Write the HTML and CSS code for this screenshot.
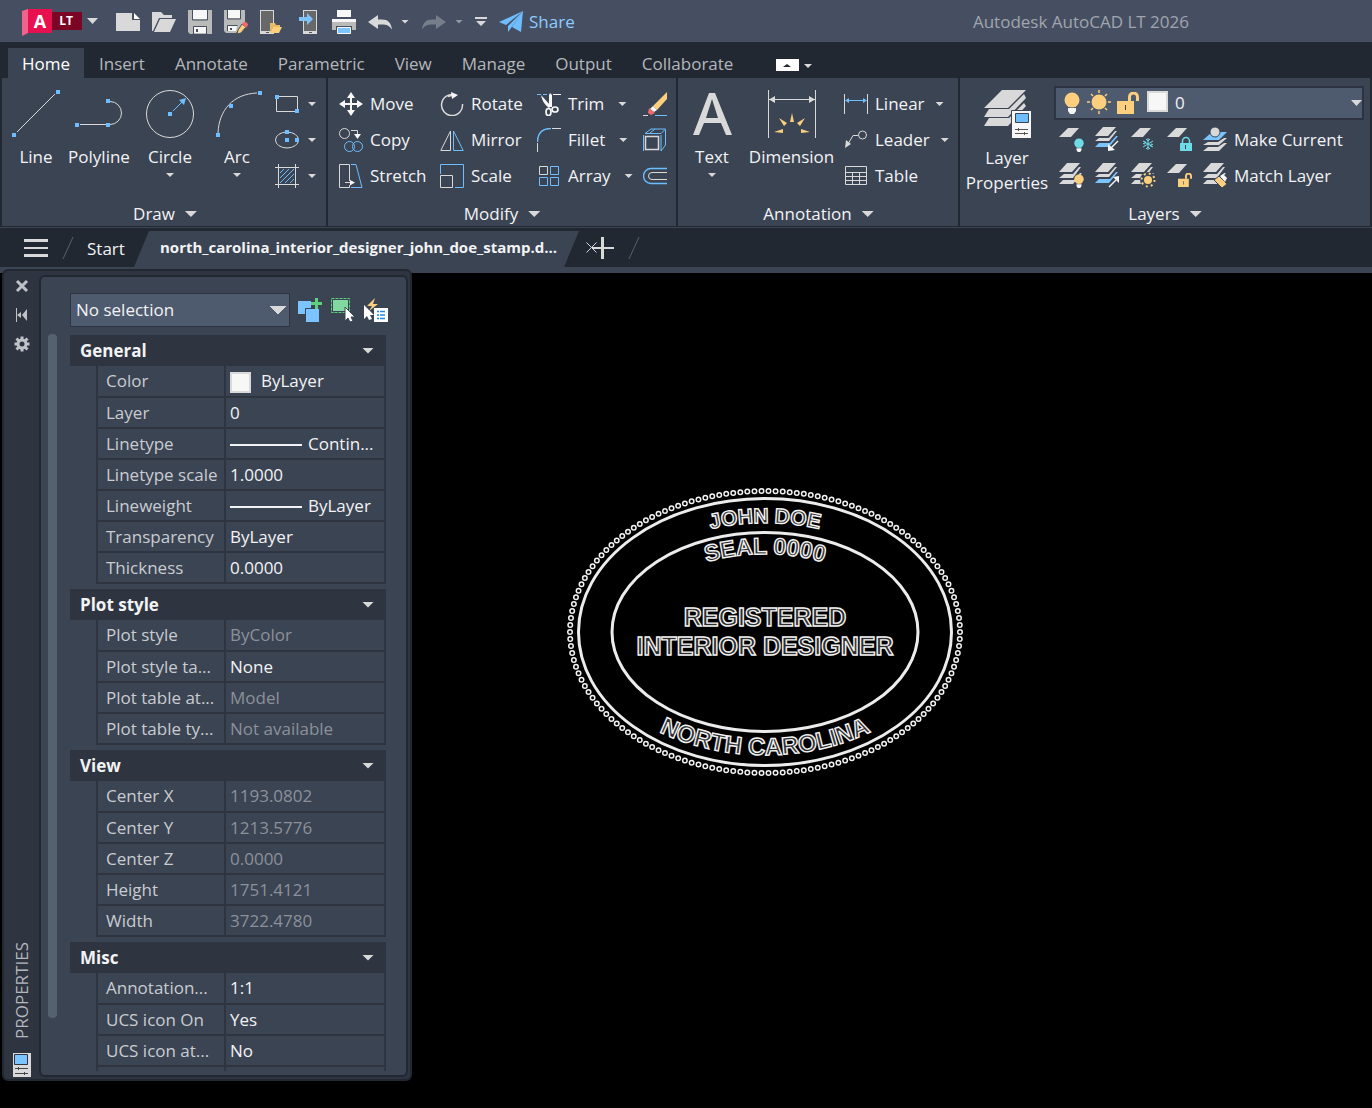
FILE: index.html
```html
<!DOCTYPE html>
<html lang="en">
<head>
<meta charset="utf-8">
<title>Autodesk AutoCAD LT 2026</title>
<link rel="stylesheet" href="styles.css">
</head>
<body>
<svg class="defs" aria-hidden="true">
  <symbol id="sheet" viewBox="0 0 20 10"><path fill="#d9d9d9" d="M9 0h11l-8 9H0z"/></symbol>
  <symbol id="stack" viewBox="0 0 24 24">
    <path fill="#d9d9d9" d="M8 0h13l-8 9H0zM5 11h9l6-7h2l-8 11H0zM4 17h11l6-7h2l-9 11H0z"/>
  </symbol>
  <symbol id="stack-blue" viewBox="0 0 24 24">
    <path fill="#d9d9d9" d="M8 0h13l-8 9H0zM4 11h10l6-7h2l-8 10H0z"/><path fill="#7cc4ff" d="M4 16h11l6-7h2l-9 11H0z"/>
  </symbol>
  <symbol id="bulb" viewBox="0 0 16 22"><circle cx="8" cy="8" r="7.500" fill="currentColor"/><path fill="currentColor" d="M4 12h8v3H4z"/><path fill="#f7f7f7" d="M4 16h8v3l-2 3H6l-2-3z"/></symbol>
  <symbol id="lock-open" viewBox="0 0 22 22"><path fill="#fbcf7e" d="M0 9h17v13H0z"/><path fill="none" stroke="#fbcf7e" stroke-width="3" d="M12.500 9V5a4 4 0 0 1 8 0v4"/><path fill="#3b4453" d="M8 13h1v5H8z"/></symbol>
</svg>

<header class="titlebar">
  <button class="logo" aria-label="Application menu">
    <svg width="76" height="28" viewBox="0 0 76 28"><path fill="#f0648c" d="M0 2l6-2v24l-6 3z"/><path fill="#e8114f" d="M6 0h24v24H6z"/><path fill="#7a0524" d="M30 3h30v18H30z"/><text class="logo-a" x="18" y="19">A</text><text class="logo-lt" x="44" y="16">LT</text><path fill="#d9d9d9" d="M65 9h11l-5.500 6z"/></svg>
  </button>
  <div class="quick">
    <button aria-label="New"><svg width="24" height="24"><path fill="#d9d9d9" d="M0 3h16v7h8v11H0z"/><path fill="#fff" d="M18 3l6 6h-6z"/></svg></button>
    <button aria-label="Open"><svg width="24" height="24"><path fill="#d9d9d9" d="M0 21V2h9l3 3h8v3H7L1 21z"/><path fill="#d9d9d9" d="M8 9h16l-6 13H2z"/></svg></button>
    <button aria-label="Save"><svg width="24" height="24"><path fill="#b9bbb8" d="M0 0h24v24H2l-2-2z"/><path fill="#f7f7f7" d="M5 0h14v9H5zM6 17h12v6H6z"/><path stroke="#464f61" fill="none" d="M4.500 0v10h15V0M5.500 24v-7.500h13V24"/><path fill="#464f61" d="M8 19h2v3H8z"/></svg></button>
    <button aria-label="Save as"><svg width="24" height="24"><path fill="#b9bbb8" d="M0 0h21v12l-9 11H2l-2-2z"/><path fill="#f7f7f7" d="M4 0h12v8H4zM4 16h9l-1 5H4z"/><path stroke="#464f61" fill="none" d="M3.500 0v9h13V0M3.500 21v-5.500h10"/><path fill="#464f61" d="M6 18h2v2H6z"/><path fill="#fbcf7e" stroke="#464f61" d="M14 20l-1 4 4-1 5-6-4-3z"/><path fill="#f16a6a" d="M18 14l2-2h2l2 2v1l-2 3z"/></svg></button>
    <button aria-label="Open from mobile"><svg width="24" height="24"><rect x=".5" y=".5" width="13" height="23" fill="#686868" stroke="#d9d9d9"/><path fill="#d9d9d9" d="M0 21h14v3H0z"/><path fill="#555" d="M6 22h3v1H6z"/><path fill="#e9bb66" d="M10 23V13h5l1 2h4v2h-7z"/><path fill="#fbcf7e" d="M13 17h9l-3 6h-9z"/></svg></button>
    <button aria-label="Save to mobile"><svg width="24" height="24"><rect x="7.500" y=".5" width="13" height="23" fill="#686868" stroke="#d9d9d9"/><path fill="#d9d9d9" d="M7 21h14v3H7z"/><path fill="#555" d="M13 22h3v1h-3z"/><path fill="#7cc4ff" d="M3 7h8V3l6 6-6 6v-4H3z"/></svg></button>
    <button aria-label="Plot"><svg width="24" height="24"><path fill="#f7f7f7" d="M5 0h14v7H5zM0 9h24v4H0z"/><path fill="#b9bbb8" d="M0 12h24v8h-4v-4H4v4H0z"/><path fill="#7cc4ff" stroke="#f7f7f7" d="M5.500 17.500h13v6h-13z"/></svg></button>
    <button aria-label="Undo"><svg width="24" height="24"><path fill="#d9d9d9" d="M0 12l10-7v4.500h4c6 0 9 3 10 10-3-4-5-5-10-5h-4V19z"/></svg></button>
    <button class="drop" aria-label="Undo list"></button>
    <button aria-label="Redo"><svg width="24" height="24"><path fill="#777e8b" d="M24 12L14 5v4.500h-4c-6 0-9 3-10 10 3-4 5-5 10-5h4V19z"/></svg></button>
    <button class="drop dim" aria-label="Redo list"></button>
    <button class="customize" aria-label="Customize"><svg width="12" height="12"><path fill="#d9d9d9" d="M0 1h12v2H0zM1 5h10l-5 5z"/></svg></button>
    <button class="share"><svg width="24" height="22"><path fill="#6ebeff" d="M24 0L0 11l7 3zM24 0L9 15v6l3-4zM24 0L13 16l9 5z"/></svg>Share</button>
  </div>
  <h1 class="app-title">Autodesk AutoCAD LT 2026</h1>
</header>

<nav class="ribbon-tabs">
  <a class="on" href="#home">Home</a><a href="#insert">Insert</a><a href="#annotate">Annotate</a><a href="#parametric">Parametric</a><a href="#view">View</a><a href="#manage">Manage</a><a href="#output">Output</a><a href="#collaborate">Collaborate</a>
  <button class="minimize" aria-label="Minimize ribbon"><svg width="36" height="12"><path fill="#fff" d="M0 0h23v12H0z"/><path fill="#222831" d="M7 8h8l-4-3z"/><path fill="#d9d9d9" d="M28 5h8l-4 4z"/></svg></button>
</nav>

<div class="ribbon">
  <section class="panel draw">
    <div class="tools">
      <button class="big line"><svg width="50" height="50" fill="none" stroke="#d9d9d9"><path d="M6 42L44 4"/><path fill="#6ebeff" stroke="none" d="M1 43h4v4H1zM45 0h4v4h-4z"/></svg>Line</button>
      <button class="big polyline"><svg width="50" height="50" fill="none" stroke="#d9d9d9"><path d="M6 34.500h26M36 11.500a11.500 11.500 0 0 1 0 23"/><path fill="#6ebeff" stroke="none" d="M1 33h4v4H1zM32 33h4v4h-4zM32 9h4v4h-4z"/></svg>Polyline</button>
      <button class="big circle"><svg width="50" height="50" fill="none" stroke="#d9d9d9"><circle cx="25" cy="24" r="23.500"/><path stroke="#6ebeff" d="M28 21l9-9"/><path fill="#6ebeff" stroke="none" d="M23 22h4v4h-4zM41 8l-2 7-5-5z"/></svg>Circle<i class="caret"></i></button>
      <button class="big arc"><svg width="50" height="50" fill="none" stroke="#d9d9d9"><path d="M6 43C7 20 21 4 45 3"/><path fill="#6ebeff" stroke="none" d="M4 43h4v4H4zM17 14h4v4h-4zM46 1h4v4h-4z"/></svg>Arc<i class="caret"></i></button>
      <div class="column">
        <button class="tool" aria-label="Rectangle"><svg width="24" height="24" fill="none" stroke="#d9d9d9"><path d="M1.500 4.500h21v15h-21z"/><path fill="#6ebeff" stroke="none" d="M0 3h4v4H0zM20 17h4v4h-4z"/></svg><i class="caret"></i></button>
        <button class="tool" aria-label="Ellipse"><svg width="24" height="24" fill="none" stroke="#d9d9d9"><ellipse cx="12" cy="12" rx="11.500" ry="8"/><path fill="#6ebeff" stroke="none" d="M10 2h4v4h-4zM10 10h4v4h-4zM20 10h4v4h-4z"/></svg><i class="caret"></i></button>
        <button class="tool" aria-label="Hatch"><svg width="24" height="24" fill="none" stroke="#d9d9d9"><path d="M0 3.500h24M0 20.500h24M3.500 0v24M20.500 0v24"/><path stroke="#6ebeff" d="M5 9l4-4M5 14l9-9M5 19L19 5M10 19l9-9M15 19l4-4"/></svg><i class="caret"></i></button>
      </div>
    </div>
    <button class="panel-name">Draw<i class="caret wide"></i></button>
  </section>

  <section class="panel modify">
    <div class="tools grid">
      <button class="tool"><svg width="24" height="24"><path fill="#f7f7f7" d="M12 0l4 6h-3v5h5V8l6 4-6 4v-3h-5v5h3l-4 6-4-6h3v-5H6v3l-6-4 6-4v3h5V6H8z"/></svg>Move</button>
      <button class="tool"><svg width="24" height="24" fill="none" stroke="#d9d9d9"><path stroke-width="1.500" d="M15 3A10.500 10.500 0 1 0 22.500 12M8 4.500L13 3"/><path fill="#f7f7f7" stroke="none" d="M11 0l7 3-6 4z"/></svg>Rotate</button>
      <button class="tool"><svg width="24" height="24" fill="none" stroke="#f7f7f7"><path stroke="#6ebeff" stroke-dasharray="4 2" d="M0 2.500h12"/><path d="M16 2.500h8"/><path fill="#f7f7f7" stroke="none" d="M4 3l10 11-2 2C7 12 5 8 4 3zM13 1l2 2v12h-3V3z"/><ellipse cx="11.500" cy="20" rx="2.500" ry="3.500" stroke-width="1.700"/><ellipse cx="18" cy="17.500" rx="3" ry="2.500" stroke-width="1.700"/></svg>Trim<i class="caret"></i></button>
      <button class="tool" aria-label="Erase"><svg width="24" height="24"><path fill="#fbcf7e" d="M24 0v7L14 18l-4-4z"/><path fill="#f7f7f7" d="M10 14l4 4-3 2-4-3z"/><path fill="#f16a6a" d="M6 16l6 5-4 2-3-2z"/><path fill="#d9d9d9" d="M0 23h5v1H0z"/><path fill="#6ebeff" d="M12 23h12v1H12z"/></svg></button>

      <button class="tool"><svg width="24" height="24" fill="none" stroke="#d9d9d9"><circle cx="5.500" cy="5.500" r="5"/><path d="M12 2.500h6.500V8"/><path fill="#f7f7f7" stroke="none" d="M15 6h7l-3.500 5z"/><g stroke="#6ebeff"><circle cx="10.500" cy="18.500" r="5"/><circle cx="18.500" cy="18.500" r="5"/></g></svg>Copy</button>
      <button class="tool"><svg width="24" height="24" fill="none" stroke="#d9d9d9"><path d="M10.500 3v19.500H.8z"/><path stroke="#6ebeff" d="M13.500 3v19.500h9.700z"/></svg>Mirror</button>
      <button class="tool"><svg width="24" height="24" fill="none" stroke="#d9d9d9"><path stroke="#6ebeff" stroke-width="1.500" d="M.5 14C.5 5 5 .5 14 .5"/><path d="M15 .5h9M.5 15v9"/></svg>Fillet<i class="caret"></i></button>
      <button class="tool" aria-label="Explode"><svg width="24" height="24" fill="none" stroke="#6ebeff"><path d="M.5 23V7M2 5.500L8 1h14.500L18 5.500zM18 7v16l4.500-6V2M7 5l5-4"/><path stroke="#d9d9d9" stroke-width="1.500" d="M2.500 8.500h13v13h-13z"/></svg></button>

      <button class="tool"><svg width="24" height="24" fill="none" stroke="#d9d9d9"><path d="M10.500 17V.5H.5v23h10V21M6 18.500h8"/><path fill="#f7f7f7" stroke="none" d="M11 16l5 2.500-5 3z"/><path stroke="#6ebeff" d="M12 .5h5l6 23H12"/></svg>Stretch</button>
      <button class="tool"><svg width="24" height="24" fill="none" stroke="#6ebeff"><path d="M.5 10V.5h23v23H15"/><path stroke="#d9d9d9" d="M.5 11.500h12v12H.5z"/></svg>Scale</button>
      <button class="tool"><svg width="24" height="24" fill="none" stroke="#6ebeff"><path stroke="#d9d9d9" d="M2.500 2.500h8v8h-8z"/><path d="M13.500 2.500h8v8h-8zM2.500 13.500h8v8h-8zM13.500 13.500h8v8h-8z"/></svg>Array<i class="caret"></i></button>
      <button class="tool" aria-label="Offset"><svg width="24" height="24" fill="none" stroke="#6ebeff"><path stroke-width="1.300" d="M24 4.500H8a7.500 7.500 0 0 0 0 15h16"/><path stroke="#d9d9d9" d="M24 8.500H9a3.500 3.500 0 0 0 0 7h15"/></svg></button>
    </div>
    <button class="panel-name">Modify<i class="caret wide"></i></button>
  </section>

  <section class="panel annotation">
    <div class="tools">
      <button class="big text"><svg width="50" height="50"><path fill="#d9d9d9" fill-rule="evenodd" d="M22 3h6l17 42h-6l-5-12H17l-5 12H6zM25 9l-6 19h12z"/></svg>Text<i class="caret"></i></button>
      <button class="big dimension"><svg width="50" height="50" fill="none" stroke="#d9d9d9"><path d="M1.500 0v48M48.500 0v48M2 9.500h46"/><path fill="#d9d9d9" stroke="none" d="M2 9.500L8 6v7zM48 9.500L42 6v7z"/><path fill="#fbcf7e" stroke="none" d="M25 23l2 9h-4zM12 28l8 5-3 3zM38 28l-8 5 3 3zM7 42l9-3v4zM43 42l-9-3v4z"/></svg>Dimension</button>
      <div class="column">
        <button class="tool"><svg width="24" height="24" fill="none" stroke="#d9d9d9"><path d="M.5 2v20M23.500 2v20"/><path stroke="#6ebeff" d="M2 8.500h20"/><path fill="#6ebeff" stroke="none" d="M1 8.500L5 6v5zM23 8.500L19 6v5z"/></svg>Linear<i class="caret"></i></button>
        <button class="tool"><svg width="24" height="24" fill="none" stroke="#d9d9d9"><circle cx="18.500" cy="7" r="4"/><path d="M14 7.500H9L4 16"/><path fill="#d9d9d9" stroke="none" d="M1 20l1-8 5 4z"/></svg>Leader<i class="caret"></i></button>
        <button class="tool"><svg width="24" height="24" fill="none" stroke="#d9d9d9"><path d="M1.500 2.500h21v18h-21zM1 8.500h22M1 12.500h22M1 16.500h22M8.500 8v12M15.500 8v12"/></svg>Table</button>
      </div>
    </div>
    <button class="panel-name">Annotation<i class="caret wide"></i></button>
  </section>

  <section class="panel layers">
    <div class="tools">
      <button class="big properties"><svg width="50" height="50"><path fill="#d9d9d9" d="M20 0h24L26 18H2zM7 19h20L42 4l2 4-18 19H2zM7 28h20l15-15 2 3-18 20H2z"/><path fill="#f7f7f7" stroke="#3b4453" d="M29.500 20.500h20v28h-20z"/><path fill="#6ebeff" stroke="#3b4453" d="M33.500 23.500h13v9h-13z"/><path stroke="#555" d="M33 39.500h13M33 43.500h13M36.500 38v3M42.500 42v3"/></svg>Layer<br>Properties</button>
      <div class="layer-side">
        <label class="layer-combo">
          <svg width="110" height="26" aria-label="Layer"><use href="#bulb" x="2" y="2" width="16" height="22" color="#fbcf7e"/><circle cx="37" cy="12" r="7.500" fill="#fbcf7e"/><path stroke="#fbcf7e" stroke-width="1.500" d="M37 0v3M37 21v3M25 12h3M46 12h3M29 4l2 2M45 4l-2 2M29 20l2-2M45 20l-2-2"/><use href="#lock-open" x="55" y="2" width="22" height="22"/><path fill="#f7f7f7" stroke="#d9d9d9" stroke-width="2" d="M86 2h19v19H86z"/></svg>
          <select><option>0</option></select>
        </label>
        <div class="layer-grid">
          <button class="tool" aria-label="Layer off"><svg width="26" height="26"><use href="#sheet" y="1" width="20" height="10"/><use href="#bulb" x="15" y="11" width="10" height="14" color="#6fdbe6"/></svg></button>
          <button class="tool" aria-label="Isolate"><svg width="26" height="26"><use href="#stack-blue" width="24" height="24"/><path stroke="#f7f7f7" stroke-width="1.500" d="M23 14l-7 7"/><path fill="#f7f7f7" d="M13 24v-7l7 6z"/></svg></button>
          <button class="tool" aria-label="Freeze"><svg width="26" height="26"><use href="#sheet" y="1" width="20" height="10"/><path stroke="#6fdbe6" fill="none" d="M17 11v12M12 14l10 6M22 14l-10 6M15 12l2 2 2-2M15 22l2-2 2 2M12 16.500l2 .5v-3M22 17.500l-2-.5v3"/></svg></button>
          <button class="tool" aria-label="Lock"><svg width="26" height="26"><use href="#sheet" y="1" width="20" height="10"/><path fill="#6fdbe6" d="M13 16h12v8H13z"/><path fill="none" stroke="#6fdbe6" stroke-width="1.500" d="M15.500 16v-2a3.500 3.500 0 0 1 7 0v2"/><path fill="#3b4453" d="M18 18h1v4h-1z"/></svg></button>
          <button class="tool"><svg width="26" height="26"><path fill="#d9d9d9" d="M5 15h10l6-4h3l-8 7H0zM5 20h10l6-4h3l-8 8H0z"/><path fill="#7cc4ff" d="M9 5h15l-8 8H0z"/><circle cx="12" cy="5" r="5" fill="#d9d9d9" stroke="#3b4453"/></svg>Make Current</button>
          <button class="tool" aria-label="All layers on"><svg width="26" height="26"><use href="#stack" width="24" height="24"/><use href="#bulb" x="15" y="11" width="10" height="14" color="#fbcf7e"/></svg></button>
          <button class="tool" aria-label="Unisolate"><svg width="26" height="26"><use href="#stack-blue" width="24" height="24"/><path stroke="#f7f7f7" stroke-width="1.500" d="M14 24l7-7"/><path fill="#f7f7f7" d="M24 13v7l-6-6z"/></svg></button>
          <button class="tool" aria-label="Thaw"><svg width="26" height="26"><use href="#stack" width="24" height="24"/><circle cx="17" cy="17" r="8" fill="#3b4453"/><circle cx="17" cy="17" r="4" fill="#fbcf7e"/><circle cx="17" cy="17" r="6.500" fill="none" stroke="#fbcf7e" stroke-width="2" stroke-dasharray="2 3.100"/></svg></button>
          <button class="tool" aria-label="Unlock"><svg width="26" height="26"><use href="#sheet" y="1" width="20" height="10"/><use href="#lock-open" x="11" y="10" width="14" height="14"/></svg></button>
          <button class="tool"><svg width="26" height="26"><use href="#stack" width="24" height="24"/><path fill="#fbcf7e" stroke="#3b4453" d="M11 17l5-4 8 8-5 4z"/><path fill="#f7f7f7" d="M17 13l3-2 4 4-2 4z"/></svg>Match Layer</button>
        </div>
      </div>
    </div>
    <button class="panel-name">Layers<i class="caret wide"></i></button>
  </section>
</div>

<nav class="files">
  <button class="menu" aria-label="File tab menu"><svg width="24" height="18"><path fill="#d9d9d9" d="M0 0h24v3H0zM0 8h24v2H0zM0 15h24v3H0z"/></svg></button>
  <svg class="slash" width="12" height="24"><path stroke="#566072" d="M1 23L11 1"/></svg>
  <a class="start" href="#start">Start</a>
  <a class="file" href="#drawing">north_carolina_interior_designer_john_doe_stamp.d...</a>
  <button class="close" aria-label="Close file"><svg width="11" height="11"><path stroke="#d9d9d9" d="M.5 .5l10 10M10.500 .5l-10 10"/></svg></button>
  <button class="add" aria-label="New drawing"><svg width="22" height="22"><path fill="#d9d9d9" d="M9 0h3v10h10v2H12v10H9V12H0v-2h9z"/></svg></button>
  <svg class="slash" width="12" height="24"><path stroke="#566072" d="M1 23L11 1"/></svg>
</nav>

<main class="workspace">
  <svg class="seal" width="400" height="292" viewBox="0 0 400 292">
    <defs>
      <path id="arc-name" d="M34 146A166 109 0 0 1 366 146"/>
      <path id="arc-seal" d="M69 146A131 78 0 0 1 331 146"/>
      <path id="arc-state" d="M19 146A181 123 0 0 0 381 146"/>
    </defs>
    <g fill="none" stroke-linecap="round" stroke-dasharray="0 1">
      <ellipse cx="200" cy="146" rx="195" ry="141" pathLength="150" stroke="#f2f2f2" stroke-width="6"/>
      <ellipse cx="200" cy="146" rx="195" ry="141" pathLength="150" stroke="#000" stroke-width="3"/>
    </g>
    <g fill="none" stroke="#ececec" stroke-width="3">
      <ellipse cx="200" cy="146" rx="186.500" ry="133.500"/>
      <ellipse cx="200" cy="146" rx="153" ry="99.500"/>
    </g>
    <g class="lettering">
      <text class="s21"><textPath href="#arc-name" startOffset="50%">JOHN DOE</textPath></text>
      <text class="s23"><textPath href="#arc-seal" startOffset="50%">SEAL 0000</textPath></text>
      <text class="s25" x="200" y="140">REGISTERED</text>
      <text class="s25" x="200" y="169">INTERIOR DESIGNER</text>
      <text class="s24"><textPath href="#arc-state" startOffset="50%">NORTH CAROLINA</textPath></text>
    </g>
  </svg>

  <aside class="palette">
    <div class="rail">
      <button aria-label="Close"><svg width="16" height="16"><path stroke="#bfc2c7" stroke-width="3" d="M3 3l10 10M13 3L3 13"/></svg></button>
      <button aria-label="Auto-hide"><svg width="16" height="16"><path fill="#bfc2c7" d="M2 1h1v14H2zM3 8l4-3v6zM8 8l5-6v12z"/></svg></button>
      <button aria-label="Settings"><svg width="16" height="16"><circle cx="8" cy="8" r="4" fill="none" stroke="#bfc2c7" stroke-width="3"/><path stroke="#bfc2c7" stroke-width="3" d="M8 .5V4M8 12v3.500M.5 8H4M12 8h3.500M2.500 2.500l3 3M13.500 2.500l-3 3M2.500 13.500l3-3M13.500 13.500l-3-3"/></svg></button>
      <h2>PROPERTIES</h2>
      <svg width="18" height="24"><path fill="#d9d9d9" d="M0 0h18v24H0z"/><path fill="#7cc4ff" stroke="#2e3440" d="M1.500 1.500h13v10h-13z"/><path stroke="#444" d="M2 15.500h13M2 20.500h13M5.500 14v3M11.500 19v3"/></svg>
    </div>
    <div class="sheet">
      <div class="scroll"></div>
      <div class="body">
        <div class="pick">
          <select aria-label="Selection"><option>No selection</option></select>
          <button aria-label="Toggle PICKADD"><svg width="26" height="26"><path fill="#7cc4ff" d="M1 4h13v13H1z"/><path fill="#7cc4ff" stroke="#3b4453" d="M8.500 11.500h14v14h-14z"/><path fill="#5fd07c" d="M18 1h3v4h4v3h-4v4h-3V8h-4V5h4z"/></svg></button>
          <button aria-label="Select objects"><svg width="26" height="26"><path fill="#82d9a0" d="M3 3h15v11H3z"/><path fill="none" stroke="#5fd07c" stroke-dasharray="3 1" d="M1.500 1.500h18v14h-18z"/><path fill="#fff" stroke="#3b4453" d="M15 10v14l3-3 2 4 3-1-2-4h4z"/></svg></button>
          <button aria-label="Quick select"><svg width="26" height="26"><path fill="#fbcf7e" d="M12 1L4 9h5l-3 5 9-7h-5z"/><path fill="#fff" d="M1 8v14l3-3 2 4 3-1-2-4h4z"/><path fill="#fff" d="M11 11h14v14H11z"/><path stroke="#1e88e5" stroke-width="1.500" d="M14 14.500h2M17 14.500h5M14 18h2M17 18h5M14 21.500h2M17 21.500h5"/></svg></button>
        </div>
        <div class="sections">
          <section>
            <button class="head">General<i class="caret wide"></i></button>
            <table>
              <tr><th scope="row">Color</th><td><span class="swatch"></span>ByLayer</td></tr>
              <tr><th scope="row">Layer</th><td>0</td></tr>
              <tr><th scope="row">Linetype</th><td><span class="rule"></span>Contin...</td></tr>
              <tr><th scope="row">Linetype scale</th><td>1.0000</td></tr>
              <tr><th scope="row">Lineweight</th><td><span class="rule"></span>ByLayer</td></tr>
              <tr><th scope="row">Transparency</th><td>ByLayer</td></tr>
              <tr><th scope="row">Thickness</th><td>0.0000</td></tr>
            </table>
          </section>
          <section>
            <button class="head">Plot style<i class="caret wide"></i></button>
            <table>
              <tr><th scope="row">Plot style</th><td class="ro">ByColor</td></tr>
              <tr><th scope="row">Plot style ta...</th><td>None</td></tr>
              <tr><th scope="row">Plot table at...</th><td class="ro">Model</td></tr>
              <tr><th scope="row">Plot table ty...</th><td class="ro">Not available</td></tr>
            </table>
          </section>
          <section>
            <button class="head">View<i class="caret wide"></i></button>
            <table>
              <tr><th scope="row">Center X</th><td class="ro">1193.0802</td></tr>
              <tr><th scope="row">Center Y</th><td class="ro">1213.5776</td></tr>
              <tr><th scope="row">Center Z</th><td class="ro">0.0000</td></tr>
              <tr><th scope="row">Height</th><td class="ro">1751.4121</td></tr>
              <tr><th scope="row">Width</th><td class="ro">3722.4780</td></tr>
            </table>
          </section>
          <section>
            <button class="head">Misc<i class="caret wide"></i></button>
            <table>
              <tr><th scope="row">Annotation...</th><td>1:1</td></tr>
              <tr><th scope="row">UCS icon On</th><td>Yes</td></tr>
              <tr><th scope="row">UCS icon at...</th><td>No</td></tr>
              <tr><th scope="row"></th><td></td></tr>
            </table>
          </section>
        </div>
      </div>
    </div>
  </aside>
</main>
</body>
</html>
```
FILE: styles.css
```css
* { box-sizing: border-box; }
body {
  margin: 0;
  min-height: 100vh;
  display: flex;
  flex-direction: column;
  background: #222831;
  color: #f2f3f5;
  font: 17px/24px "Open Sans", "Noto Sans", sans-serif;
}
button, select {
  margin: 0;
  padding: 0;
  border: 0;
  background: none;
  color: inherit;
  font: inherit;
}
a { color: inherit; text-decoration: none; }
svg { display: block; flex: none; }
.defs { position: absolute; width: 0; height: 0; }

.caret {
  flex: none;
  width: 8px;
  height: 4px;
  background: #d9d9d9;
  clip-path: polygon(0 0, 100% 0, 50% 100%);
}
.caret.wide { width: 12px; height: 6px; }

/* Title bar */
.titlebar {
  display: flex;
  align-items: center;
  height: 42px;
  padding: 1px 0 0 22px;
  background: #464f61;
}
.logo { margin-right: 18px; padding-top: 2px; }
.logo svg { overflow: visible; }
.logo-a { font: 700 18px "Open Sans", sans-serif; fill: #fff; text-anchor: middle; }
.logo-lt { font: 700 12px "Open Sans", sans-serif; fill: #fff; text-anchor: middle; }
.quick { display: flex; align-items: center; gap: 12px; }
.drop {
  width: 8px;
  height: 4px;
  margin: 0 -1px 0 -3px;
  background: #d9d9d9;
  clip-path: polygon(0 0, 100% 0, 50% 100%);
}
.drop + button { margin-left: 2px; }
.drop.dim { background: #9298a2; }
.drop + .customize { margin-left: 1px; }
.share { display: flex; align-items: center; gap: 6px; color: #8ecbff; }
.app-title {
  flex: 1;
  margin: 0 183px 0 0;
  text-align: right;
  font-size: 17px;
  font-weight: 400;
  color: #a0a5af;
}

/* Ribbon tabs */
.ribbon-tabs { display: flex; height: 36px; padding: 6px 0 0 8px; }
.ribbon-tabs a { padding: 4px 15px 0; color: #b4b7bc; }
.ribbon-tabs .on { padding: 4px 14px 0; background: #3b4453; color: #fff; }
.minimize { margin: 4px 0 0 28px; }

/* Ribbon panels */
.ribbon { display: flex; gap: 2px; padding: 0 2px; border-bottom: 1px solid #222831; }
.panel { display: flex; flex-direction: column; height: 148px; background: #3b4453; }
.draw { width: 324px; padding-left: 6px; }
.modify { width: 348px; }
.annotation { width: 280px; padding-left: 7px; }
.layers { flex: 1; }
.tools { display: flex; flex: 1; padding-top: 8px; }
.big {
  display: flex;
  flex-direction: column;
  align-items: center;
  align-self: flex-start;
  padding-top: 4px;
}
.big svg { margin-bottom: 5px; }
.big .caret { margin-top: 4px; }
.line { width: 56px; }
.polyline { width: 70px; }
.circle { width: 72px; }
.arc { width: 62px; margin-right: 7px; }
.text { width: 54px; }
.dimension { width: 105px; }
.properties { width: 94px; line-height: 25px; }
.tool { display: flex; align-items: center; height: 36px; gap: 7px; white-space: nowrap; }
.tool .caret { margin-left: 7px; }
.draw .tool .caret { margin-left: 2px; }
.annotation .tool .caret { margin-left: 4px; }
.grid {
  display: grid;
  grid-template-columns: 101px 97px 106px 24px;
  align-content: start;
  padding-left: 11px;
}
.panel-name {
  display: flex;
  align-items: center;
  align-self: center;
  gap: 10px;
  height: 24px;
}
.draw .panel-name { margin-right: 4px; }
.annotation .panel-name { margin-right: 6px; }
.layer-side { flex: 1; padding-right: 6px; }
.layer-combo {
  display: flex;
  align-items: center;
  height: 34px;
  margin-bottom: 2px;
  padding: 0 6px;
  border: 2px solid #2d3340;
  background: #4e5a6d;
}
.layer-combo select, .pick select {
  flex: 1;
  min-width: 0;
  appearance: none;
}
.layer-combo select { padding-left: 3px; }
.layer-combo::after {
  content: "";
  width: 11px;
  height: 6px;
  margin-right: -6px;
  background: #d9d9d9;
  clip-path: polygon(0 0, 100% 0, 50% 100%);
}
.layer-grid { display: grid; grid-template-columns: repeat(4, 36px) 1fr; padding-left: 5px; }
.layer-grid .tool { gap: 5px; }

/* File tabs */
.files {
  display: flex;
  align-items: center;
  height: 46px;
  padding-left: 24px;
  border-top: 1px solid #3b4453;
  border-bottom: 6px solid #3b4453;
}
.slash { margin: 0 13px 0 14px; }
.start { width: 47px; padding-top: 3px; }
.file {
  align-self: flex-end;
  width: 445px;
  height: 36px;
  padding: 4px 0 0 26px;
  background: #3b4453;
  clip-path: polygon(15px 0, 100% 0, 430px 100%, 0 100%);
  font-size: 15px;
  font-weight: 700;
  white-space: nowrap;
}
.close { margin-left: 7px; }
.add { margin-left: -5px; }

/* Drawing area */
.workspace { position: relative; flex: 1; min-height: 600px; background: #000; }
.seal { position: absolute; left: 565px; top: 213px; }
.lettering text {
  font-family: "Liberation Sans", Arial, sans-serif;
  font-weight: 700;
  text-anchor: middle;
  fill: #2c2c2c;
  stroke: #f2f2f2;
  stroke-width: 1.4px;
}
.s21 { font-size: 21px; }
.s23 { font-size: 23px; }
.s24 { font-size: 24px; }
.s25 { font-size: 25px; }

/* Properties palette */
.palette {
  position: absolute;
  left: 2px;
  top: -4px;
  bottom: 27px;
  display: flex;
  width: 410px;
  padding: 2px 2px 2px 0;
  border: 2px solid #222831;
  border-radius: 6px;
  background: #2e3440;
}
.rail { display: flex; flex-direction: column; align-items: center; width: 35px; padding-top: 5px; }
.rail button { height: 16px; margin-bottom: 13px; }
.rail h2 {
  margin: auto 0 14px;
  writing-mode: vertical-rl;
  transform: rotate(180deg);
  font-size: 17px;
  font-weight: 400;
  color: #b5b8be;
}
.sheet {
  flex: 1;
  display: flex;
  margin-top: 2px;
  padding: 0 20px 4px 7px;
  border: 2px solid #222831;
  border-radius: 6px;
  background: #3b4453;
}
.scroll { width: 9px; margin: 57px 13px 53px 0; border-radius: 4px; background: #56616f; }
.body { flex: 1; display: flex; flex-direction: column; padding-top: 16px; min-width: 0; }
.pick { display: flex; align-items: center; height: 34px; margin: 0 -3px 8px 0; gap: 7px; }
.pick select {
  height: 34px;
  padding-left: 5px;
  border: 1px solid #2d3340;
  background: #4e5a6d conic-gradient(from -45deg at 50% 100%, #d9d9d9 90deg, transparent 0) no-repeat right 3px center / 16px 8px;
}
.sections { flex: 1 1 0; overflow: hidden; }
.sections section { margin-bottom: 5px; }
.head {
  display: flex;
  align-items: center;
  justify-content: space-between;
  width: 100%;
  height: 31px;
  padding: 0 12px 0 10px;
  background: #2e3440;
  font-weight: 700;
}
table { width: calc(100% - 26px); margin-left: 26px; border-collapse: collapse; table-layout: fixed; }
th, td {
  height: 31px;
  padding: 0 0 0 8px;
  border: 2px solid #2e3440;
  text-align: left;
  font-weight: 400;
  white-space: nowrap;
}
th { width: 128px; color: #c9ccd1; }
td { padding-left: 4px; }
tr:first-child > * { border-top: 0; }
.ro { color: #8b919b; }
.swatch {
  display: inline-block;
  width: 21px;
  height: 21px;
  margin-right: 10px;
  border: 2px solid #d9d9d9;
  background: #f7f7f7;
  vertical-align: middle;
}
.rule {
  display: inline-block;
  width: 72px;
  height: 2px;
  margin-right: 6px;
  background: #f2f3f5;
  vertical-align: middle;
}
```
